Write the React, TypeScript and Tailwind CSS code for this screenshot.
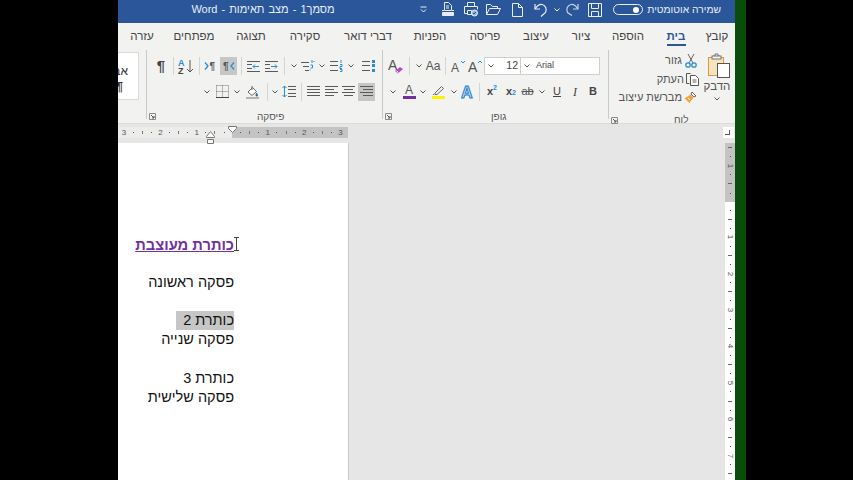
import React from "react";

const D = "#5a5a5a";
const B = "#2a8dd4";

const Btn = ({ className = "", active = false, children }: { className?: string; active?: boolean; children?: React.ReactNode }) => (
  <div className={`flex h-[18px] shrink-0 items-center justify-center ${active ? "bg-[#c6c6c6]" : ""} ${className}`}>{children}</div>
);
const Sep = ({ className = "" }: { className?: string }) => <div className={`h-[18px] w-px shrink-0 bg-[#d4d4d2] ${className}`} />;
const Chev = ({ c = "#555" }: { c?: string }) => (
  <svg width="6" height="4" viewBox="0 0 6 4"><path d="M.5.5 3 3 5.500.5" fill="none" stroke={c} /></svg>
);
const Dd = ({ className = "" }: { className?: string }) => <Btn className={`w-[10px] ${className}`}><Chev /></Btn>;
const Launcher = () => (
  <svg width="7" height="7" viewBox="0 0 7 7"><path d="M.5 6.500v-6h6v6z" fill="none" stroke="#8a8a8a" /><path d="M2 2l3 3M5 3v2H3" fill="none" stroke="#555" /></svg>
);

const L = ({ ys, x1 = 0, x2 = 13, c = D }: { ys: number[]; x1?: number; x2?: number; c?: string }) => (
  <>{ys.map((y) => <path key={y} d={`M${x1} ${y + 0.5}H${x2}`} stroke={c} />)}</>
);

const Sort = () => (
  <svg width="18" height="17" viewBox="0 0 18 17">
    <text x="1" y="8" fontSize="9" fontWeight="700" fill={B} fontFamily="Liberation Sans">A</text>
    <text x="1" y="16" fontSize="9" fontWeight="700" fill="#444" fontFamily="Liberation Sans">Z</text>
    <path d="M13 2v12M10 11l3 3 3-3" fill="none" stroke="#555" />
  </svg>
);
const Dir = ({ rtl }: { rtl?: boolean }) => (
  <svg width="13" height="10" viewBox="0 0 13 10">
    {rtl ? <path d="M12 1.500 9 5l3 3.500" fill="none" stroke={B} strokeWidth="1.300" /> : <path d="M1 1.500 4 5 1 8.500" fill="none" stroke={B} strokeWidth="1.300" />}
    <text x={rtl ? 1 : 5.5} y="9" fontSize="10" fontWeight="700" fill="#555" fontFamily="Liberation Sans">¶</text>
  </svg>
);
const Indent = ({ right }: { right?: boolean }) => (
  <svg width="13" height="11" viewBox="0 0 13 11">
    <L ys={[0, 10]} />
    <L ys={[3, 7]} x2={5} />
    {right ? <path d="M6 5.500h6M10 3.500l2 2-2 2" fill="none" stroke={B} /> : <path d="M12 5.500H6M8 3.500l-2 2 2 2" fill="none" stroke={B} />}
  </svg>
);
const Multi = () => (
  <svg width="14" height="12" viewBox="0 0 14 12">
    <L ys={[2]} x2={8} /><L ys={[6]} x1={2} x2={8} /><L ys={[10]} x1={4} x2={8} />
    <path d="M11 0v3M9.500 5h2v3h-2M8.500 10h1" stroke={B} fill="none" />
    <path d="M12.500 1.500h1" stroke={B} />
  </svg>
);
const Numbered = () => (
  <svg width="13" height="12" viewBox="0 0 13 12">
    <L ys={[1, 5, 10]} x2={8} />
    <path d="M11 0v3M10 4.500h2v2h-2v2h2M10 9.500h2v2h-2" stroke={B} fill="none" />
  </svg>
);
const Bullets = () => (
  <svg width="13" height="12" viewBox="0 0 13 12">
    <L ys={[1, 5, 10]} x2={8} />
    <rect x="10" y="0" width="3" height="3" fill={B} /><rect x="10" y="4" width="3" height="3" fill={B} /><rect x="10" y="9" width="3" height="3" fill={B} />
  </svg>
);
const Borders = () => (
  <svg width="13" height="13" viewBox="0 0 13 13">
    <path d="M.5.500h12M.5 6.500h12M.5.500v12M12.500.500v12M6.500.500v12" stroke="#777" strokeDasharray="1 1" fill="none" />
    <path d="M0 12.500h13" stroke="#444" />
  </svg>
);
const Shading = () => (
  <svg width="13" height="14" viewBox="0 0 13 14">
    <path d="M2 7 6.500 2.500 10.500 6.500 6 10.500z" fill="#fff" stroke="#666" />
    <path d="M6 1v4" stroke="#666" />
    <path d="M10.500 7.500c1 1.500 1.500 2 1.500 2.800a1 1 0 0 1-2.500 0c0-.8.500-1.500 1-2.800z" fill="#1d6fb0" />
    <path d="M0 13h13" stroke="#777" />
  </svg>
);
const Spacing = () => (
  <svg width="14" height="13" viewBox="0 0 14 13">
    <path d="M2.500 1v11M.5 3l2-2 2 2M.5 10l2 2 2-2" fill="none" stroke={B} />
    <L ys={[1, 4, 8, 11]} x1={6} x2={14} />
  </svg>
);
const Align = ({ k }: { k: number }) => {
  const x = [
    [[0, 13], [0, 13], [0, 13], [0, 13]],
    [[0, 13], [0, 9], [0, 13], [0, 9]],
    [[0, 13], [2, 11], [0, 13], [2, 11]],
    [[0, 13], [3, 13], [0, 13], [3, 13]],
  ][k];
  return (
    <svg width="13" height="11" viewBox="0 0 13 11">
      {x.map((p, i) => <path key={i} d={`M${p[0]} ${i * 3 + 0.5}H${p[1]}`} stroke={D} />)}
    </svg>
  );
};
const ClearFmt = () => (
  <svg width="16" height="17" viewBox="0 0 16 17">
    <text x="0" y="12" fontSize="14" fill="#555" fontFamily="Liberation Sans">A</text>
    <path d="M7 13l5-4 3 2-5 4.500z" fill="#b54fc4" />
    <path d="M8.500 13l2 1.500" stroke="#fff" />
  </svg>
);
const SizeA = ({ up, small }: { up?: boolean; small?: boolean }) => (
  <svg width="16" height="14" viewBox="0 0 16 14">
    <text x="1" y="13" fontSize={small ? 12 : 14} fill="#555" fontFamily="Liberation Sans">A</text>
    <path d={up ? "M11 4l2-2 2 2" : "M11 2l2 2 2-2"} fill="none" stroke={B} />
  </svg>
);
const ColorA = () => (
  <svg width="13" height="15" viewBox="0 0 13 15">
    <text x="2" y="10" fontSize="12" fill="#555" fontFamily="Liberation Sans">A</text>
    <rect x="0" y="12" width="13" height="3" fill="#7030a0" />
  </svg>
);
const Hilite = () => (
  <svg width="13" height="15" viewBox="0 0 13 15">
    <path d="M3 9 9.500 2.500 11.500 4.500 5 10.500H3z" fill="none" stroke="#666" />
    <path d="M1 10.500h1" stroke="#666" />
    <rect x="0" y="12" width="13" height="3" fill="#fff200" />
  </svg>
);
const FxA = () => (
  <svg width="14" height="14" viewBox="0 0 14 14">
    <text x="0" y="13" fontSize="16" fontWeight="700" fill="#c9e4f7" stroke="#1c7ec4" strokeWidth="1" fontFamily="Liberation Sans">A</text>
  </svg>
);
const Paste = () => (
  <svg width="24" height="25" viewBox="0 0 24 25">
    <rect x="1.500" y="4.500" width="15" height="18" fill="#f7e3bd" stroke="#d99a3a" />
    <path d="M6 4.500V3h2V1h3v2h2v1.500" fill="#fff" stroke="#777" />
    <rect x="5" y="3" width="9" height="3" fill="#f4f4f4" stroke="#777" />
    <rect x="10.500" y="10.500" width="12" height="14" fill="#fff" stroke="#555" />
  </svg>
);
const Scissors = () => (
  <svg width="12" height="15" viewBox="0 0 12 15">
    <path d="M3 1l5 9M9 1l-5 9" stroke="#666" fill="none" />
    <circle cx="3" cy="12" r="2.200" fill="none" stroke={B} strokeWidth="1.300" />
    <circle cx="9" cy="12" r="2.200" fill="none" stroke={B} strokeWidth="1.300" />
  </svg>
);
const CopyI = () => (
  <svg width="14" height="14" viewBox="0 0 14 14">
    <path d="M5.500 1.500h-4v10h3" fill="none" stroke="#555" />
    <path d="M5.500 3.500h5l3 3v7h-8z" fill="#fff" stroke="#555" />
    <path d="M7.500 8h4M7.500 10h4" stroke="#666" />
  </svg>
);
const Brush = () => (
  <svg width="13" height="13" viewBox="0 0 13 13">
    <path d="M8 1l4 4-2 1-3-3z" fill="#fff" stroke="#666" />
    <path d="M6.500 3.500l3 3-4 5.500-5-4.500z" fill="#f0a63e" />
    <path d="M4 7l2 2" stroke="#fff" />
  </svg>
);

const W = "#e8eef7";
const QPreview = () => (
  <svg width="14" height="15" viewBox="0 0 14 15" fill="none" stroke={W}>
    <path d="M3.500.500h4l3 3v5h-7z" /><path d="M5 4h3M5 6h3" />
    <path d="M1.500 10.500h11v3h-11z" fill={W} /><path d="M1 8.500h2M11 8.500h2" />
  </svg>
);
const QPrint = () => (
  <svg width="16" height="15" viewBox="0 0 16 15" fill="none" stroke={W}>
    <path d="M4.500 4.500v-4h7v4" /><path d="M4.500 11.500h-3v-7h13v3" /><path d="M4.500 8.500h4v4h-4z" />
    <circle cx="11.500" cy="11" r="3" fill="#8fb4e0" /><path d="M10 11l1 1 2-2" stroke="#2b579a" />
  </svg>
);
const QOpen = () => (
  <svg width="15" height="11" viewBox="0 0 15 11" fill="none" stroke={W}>
    <path d="M.5 10.500v-10h4l2 2h5v2" /><path d="M.5 10.500h11l3-6h-11z" />
  </svg>
);
const QNew = () => (
  <svg width="11" height="14" viewBox="0 0 11 14" fill="none" stroke={W}>
    <path d="M.5.500h6l4 4v9H.5z" /><path d="M6.500.500v4h4" />
  </svg>
);
const QUndo = () => (
  <svg width="14" height="14" viewBox="0 0 14 14" fill="none" stroke={W} strokeWidth="1.200">
    <path d="M1 1v5h5" /><path d="M1 6c2-3 4-5 7-4.500 4 .8 5 5 3.500 8L7 13.500" />
  </svg>
);
const QRedo = () => (
  <svg width="14" height="13" viewBox="0 0 14 13" fill="none" stroke="#c6d3e8" strokeWidth="1.200">
    <path d="M13 1v5H8" /><path d="M13 6c-2-3-4-5-7-4.500-4 .8-5 5-3.500 8L7 12.500" />
  </svg>
);
const QSave = () => (
  <svg width="14" height="14" viewBox="0 0 14 14" fill="none" stroke={W}>
    <path d="M.5.500h13v13H.5z" /><path d="M3.500.500v5h7v-5" /><path d="M3.500 13.500v-5h7v5" />
  </svg>
);
const QCustom = () => (
  <svg width="7" height="7" viewBox="0 0 7 7" fill="none" stroke={W}><path d="M.5 1h6M1 3.500l2.500 2.500L6 3.500" /></svg>
);

const Tab = ({ className, children }: { className: string; children: React.ReactNode }) => (
  <div className={`flex shrink-0 justify-center ${className}`}>{children}</div>
);

const HCell = ({ v }: { v: string }) => (
  <div className="flex h-[11px] w-[9.1px] shrink-0 items-center justify-center text-[8px] leading-none text-[#555]">
    {v === "." ? <div className="h-px w-px bg-[#555]" /> : v === "|" ? <div className="h-[3px] w-px bg-[#777]" /> : v}
  </div>
);
const VCell = ({ v }: { v: string }) => (
  <div className="flex h-[9.1px] w-[10px] shrink-0 items-center justify-center text-[8px] leading-none text-[#555]">
    {v === "." ? <div className="h-px w-px bg-[#555]" /> : v === "|" ? <div className="h-px w-[4px] bg-[#666]" /> : <span className="rotate-90">{v}</span>}
  </div>
);

const P = ({ className = "", children }: { className?: string; children?: React.ReactNode }) => (
  <p className={`h-[19.1px] text-[14.5px] leading-[19.1px] text-[#111] ${className}`}>{children}</p>
);

export default function App() {
  return (
    <div className="flex h-[480px] w-[853px] overflow-hidden bg-black font-['Liberation_Sans',sans-serif]">
      <div className="w-[118px] shrink-0" />
      <main className="flex w-[617px] shrink-0 flex-col overflow-hidden bg-[#f2f2f0]">
        {/* title bar */}
        <header className="flex h-[23px] shrink-0 items-center bg-[#2b579a] pb-1 text-[11px] text-[#e8eef7]">
          <div dir="rtl" className="ml-[73px] w-[144px] shrink-0 text-center whitespace-nowrap [word-spacing:1px]">מסמך1 - מצב תאימות - Word</div>
          <Btn className="ml-[81px] w-[14px]"><QCustom /></Btn>
          <Btn className="ml-[8px] w-[20px]"><QPreview /></Btn>
          <Btn className="ml-[3px] w-[20px]"><QPrint /></Btn>
          <Btn className="ml-[2px] w-[20px]"><QOpen /></Btn>
          <Btn className="ml-[4px] w-[20px]"><QNew /></Btn>
          <Btn className="ml-[4px] w-[20px]"><QUndo /></Btn>
          <Btn className="ml-px w-[10px]"><Chev c={W} /></Btn>
          <Btn className="w-[20px]"><QRedo /></Btn>
          <Btn className="ml-[3px] w-[20px]"><QSave /></Btn>
          <div className="ml-[8px] flex h-[11px] w-[30px] shrink-0 items-center justify-end rounded-full border border-[#e8eef7] pr-[3px]">
            <div className="h-[6px] w-[6px] rounded-full bg-white" />
          </div>
          <div dir="rtl" className="ml-[5px] w-[73px] shrink-0 text-right text-[10.3px] whitespace-nowrap">שמירה אוטומטית</div>
        </header>

        {/* tabs */}
        <nav className="flex h-[23px] shrink-0 items-start pt-[6.500px] pl-[8px] text-[11.5px] leading-[13px] text-[#444]">
          <Tab className="w-[32px]">עזרה</Tab>
          <Tab className="w-[72px]">מפתחים</Tab>
          <Tab className="w-[42px]">תצוגה</Tab>
          <Tab className="w-[66px]">סקירה</Tab>
          <Tab className="w-[60px]">דברי דואר</Tab>
          <Tab className="w-[64px]">הפניות</Tab>
          <Tab className="w-[46px]">פריסה</Tab>
          <Tab className="w-[56px]">עיצוב</Tab>
          <Tab className="w-[34px]">ציור</Tab>
          <Tab className="w-[60px]">הוספה</Tab>
          <Tab className="w-[36px] font-bold text-[#2b579a]">
            <div className="flex w-[19px] flex-col items-center whitespace-nowrap">
              בית
              <div className="mt-[1px] h-[2px] w-[19px] bg-[#2b579a]" />
            </div>
          </Tab>
          <Tab className="w-[46px]">קובץ</Tab>
        </nav>

        {/* ribbon */}
        <section className="flex h-[78px] shrink-0 border-b border-[#dcdcda] text-[#444]">
          <div className="flex w-[28px] shrink-0 flex-col pt-[6px]">
            <div dir="rtl" className="flex h-[48px] w-[21px] flex-col overflow-hidden border-y border-r border-[#dadad8] bg-white text-[#333]">
              <div className="mt-[9px] h-[18px] pr-[10px] text-[12px] leading-[18px] whitespace-nowrap">אבג</div>
              <div className="h-[14px] pr-[15px] text-[12px] leading-[14px] font-bold whitespace-nowrap">¶</div>
            </div>
          </div>
          <div className="my-[4px] w-px shrink-0 bg-[#c9c9c7]" />

          {/* paragraph */}
          <div className="flex w-[235px] shrink-0 flex-col pt-[11px]">
            <div className="flex h-[18px] pl-[5px]">
              <Btn className="w-[18px] text-[15px] font-bold text-[#444]">¶</Btn>
              <Sep className="mx-[3px]" />
              <Btn className="w-[18px]"><Sort /></Btn>
              <Sep className="ml-[4px] mr-[2px]" />
              <Btn className="w-[17px]"><Dir /></Btn>
              <Btn active className="ml-px w-[17px]"><Dir rtl /></Btn>
              <Sep className="ml-[4px]" />
              <Btn className="ml-[2px] w-[18px]"><Indent /></Btn>
              <Btn className="w-[18px]"><Indent right /></Btn>
              <Sep className="ml-[4px]" />
              <Dd className="ml-[4px] w-[9px]" />
              <Btn className="w-[18px]"><Multi /></Btn>
              <Dd />
              <Btn className="w-[19px]"><Numbered /></Btn>
              <Dd />
              <Btn className="ml-[3px] w-[18px]"><Bullets /></Btn>
            </div>
            <div className="mt-[7.500px] flex h-[18px] pl-[55px]">
              <Dd />
              <Btn className="w-[20px]"><Borders /></Btn>
              <Dd />
              <Btn className="ml-px w-[18px]"><Shading /></Btn>
              <Sep className="ml-[6px]" />
              <Dd className="ml-[2px]" />
              <Btn className="w-[18px]"><Spacing /></Btn>
              <Sep className="ml-[3px]" />
              <Btn className="ml-[3px] w-[17.500px]"><Align k={0} /></Btn>
              <Btn className="w-[17.500px]"><Align k={1} /></Btn>
              <Btn className="w-[17.500px]"><Align k={2} /></Btn>
              <Btn active className="w-[17.500px]"><Align k={3} /></Btn>
            </div>
            <div className="mt-[10px] flex h-[12px] items-center pl-[2px]">
              <Launcher />
              <div dir="rtl" className="ml-[101px] text-[10px] leading-[12px] text-[#555]">פיסקה</div>
            </div>
          </div>
          <div className="my-[4px] w-px shrink-0 bg-[#c9c9c7]" />

          {/* font */}
          <div className="flex w-[225px] shrink-0 flex-col pt-[11px]">
            <div className="flex h-[18px] pl-[4px]">
              <Btn className="w-[18px]"><ClearFmt /></Btn>
              <Sep className="ml-[4px]" />
              <Dd className="ml-[4px]" />
              <Btn className="w-[18px] text-[12px] text-[#555]">Aa</Btn>
              <Sep className="ml-[3px]" />
              <Btn className="ml-[3px] w-[18px]"><SizeA small /></Btn>
              <Btn className="w-[16px]"><SizeA up /></Btn>
              <div className="ml-px flex h-[18px] w-[37px] shrink-0 items-center justify-between border border-[#cfcfcd] bg-white pr-[2px] pl-[3px] text-[10.500px]"><Chev />12</div>
              <div className="flex h-[18px] w-[79px] shrink-0 items-center gap-[6px] border-y border-r border-[#cfcfcd] bg-white pl-[3px] text-[9px]"><Chev />Arial</div>
            </div>
            <div className="mt-[7.500px] flex h-[18px] pl-[5px]">
              <Dd />
              <Btn className="ml-[2px] w-[18px]"><ColorA /></Btn>
              <Dd />
              <Btn className="ml-px w-[18px]"><Hilite /></Btn>
              <Dd className="ml-[2px]" />
              <Btn className="w-[18px]"><FxA /></Btn>
              <Sep className="ml-[2px]" />
              <Btn className="ml-[3px] w-[18px] text-[11px] font-bold text-[#444]">x<sup className="text-[7px] text-[#2a8dd4]">2</sup></Btn>
              <Btn className="ml-px w-[18px] text-[11px] font-bold text-[#444]">x<sub className="text-[7px] text-[#2a8dd4]">2</sub></Btn>
              <Btn className="w-[15px] text-[11px] text-[#555] line-through">ab</Btn>
              <Dd className="ml-[2px]" />
              <Btn className="ml-px w-[18px] text-[11px] text-[#444] underline">U</Btn>
              <Btn className="w-[18px] font-['Liberation_Serif'] text-[12px] text-[#444] italic">I</Btn>
              <Btn className="w-[18px] text-[11px] font-bold text-[#444]">B</Btn>
            </div>
            <div className="mt-[10px] flex h-[12px] items-center pl-[2px]">
              <Launcher />
              <div dir="rtl" className="ml-[99px] text-[10px] leading-[12px] text-[#555]">גופן</div>
            </div>
          </div>
          <div className="my-[4px] w-px shrink-0 bg-[#c9c9c7]" />

          {/* clipboard */}
          <div className="flex flex-1 flex-col">
            <div className="flex h-[61px]">
              <div className="flex w-[90px] shrink-0 flex-col items-end pt-[5px] text-[11px] text-[#555]">
                <div className="flex h-[19px] items-center justify-end gap-[3px] pr-[2px]"><span dir="rtl">גזור</span><Scissors /></div>
                <div className="flex h-[19px] items-center justify-end gap-[1px]"><span dir="rtl">העתק</span><CopyI /></div>
                <div className="flex h-[19px] items-center justify-end gap-[2px] pr-[2px]"><span dir="rtl">מברשת עיצוב</span><Brush /></div>
              </div>
              <div className="flex w-[36px] shrink-0 flex-col items-center pt-[7px] text-[11.500px] leading-[14px] text-[#555]">
                <div className="ml-[3px]"><Paste /></div>
                <div dir="rtl" className="mt-[1px]">הדבק</div>
                <div className="mt-[3px] flex h-[6px] items-center"><Chev /></div>
              </div>
            </div>
            <div className="mt-[7px] flex h-[12px] items-center pl-[2px]">
              <Launcher />
              <div dir="rtl" className="ml-[56px] text-[10px] leading-[12px] text-[#555]">לוח</div>
            </div>
          </div>
        </section>

        {/* work area */}
        <div className="flex min-h-0 flex-1 bg-[#e6e6e6]">
          <div className="flex w-[605px] shrink-0 flex-col">
            <div className="relative flex h-[19px] shrink-0 pt-[3px]">
              <div className="flex h-[11px] w-[114px] shrink-0 bg-[#ececea] pl-[1.500px]">
                {["3", ".", "|", ".", "2", ".", "|", ".", "1", ".", "|", "."].map((v, i) => <HCell key={i} v={v} />)}
              </div>
              <div className="flex h-[11px] w-[116px] shrink-0 bg-[#c3c3c3] pl-[4px]">
                {[".", "|", ".", "1", ".", "|", ".", "2", ".", "|", ".", "3"].map((v, i) => <HCell key={i} v={v} />)}
              </div>
              <svg className="absolute top-[2px] left-[110px]" width="9" height="7" viewBox="0 0 9 7"><path d="M.5.500h8v2l-4 4-4-4z" fill="#fff" stroke="#777" /></svg>
              <svg className="absolute top-[7px] left-[88px]" width="9" height="13" viewBox="0 0 9 13"><path d="M.5 5.500l4-5 4 5v1h-8zM1.500 8.500h6v4h-6z" fill="#fff" stroke="#777" /></svg>
            </div>
            <div className="flex min-h-0 flex-1">
              <article dir="rtl" className="h-full w-[231px] shrink-0 border-r border-[#c8c8c8] bg-white pt-[92px] pr-[114px]">
                <P className="relative pt-px text-[14.7px] font-bold whitespace-nowrap text-[#7030a0] underline">
                  כותרת מעוצבת
                  <svg className="absolute top-[2px] right-[-5px]" width="5" height="14" viewBox="0 0 5 14"><path d="M0 .500h5M2.500.500v13M0 13.500h5" fill="none" stroke="#444" /></svg>
                </P>
                <P />
                <P className="whitespace-nowrap">פסקה ראשונה</P>
                <P />
                <P className="whitespace-nowrap"><span className="inline-block bg-[#c6c6c6] pl-[7px]">כותרת 2</span></P>
                <P className="whitespace-nowrap">פסקה שנייה</P>
                <P />
                <P className="whitespace-nowrap">כותרת 3</P>
                <P className="whitespace-nowrap">פסקה שלישית</P>
              </article>
            </div>
          </div>
          <div className="flex w-[12px] shrink-0 flex-col pt-[3px]">
            <div className="flex h-[11px] w-[11px] items-end justify-center bg-white pb-[2px]">
              <svg width="7" height="6" viewBox="0 0 7 6"><path d="M0 4.500h5M4.500 0v5" stroke="#555" /></svg>
            </div>
            <div className="mt-[5px] ml-[2px] flex h-[59px] w-[10px] flex-col overflow-hidden bg-[#c3c3c3]">
              <div className="h-[3px]" />
              {["|", ".", "1", ".", "|", ".", ""].map((v, i) => <VCell key={i} v={v} />)}
            </div>
            <div className="ml-[2px] flex min-h-0 w-[10px] flex-1 flex-col overflow-hidden bg-white pt-[3.500px]">
              {[".", "|", ".", "1", ".", "|", ".", "2", ".", "|", ".", "3", ".", "|", ".", "4", ".", "|", ".", "5", ".", "|", ".", "6", ".", "|", ".", "7", ".", "|", "."].map((v, i) => <VCell key={i} v={v} />)}
            </div>
          </div>
        </div>
      </main>
      <div className="w-[11px] shrink-0 bg-[#0a4d0a]" />
    </div>
  );
}
